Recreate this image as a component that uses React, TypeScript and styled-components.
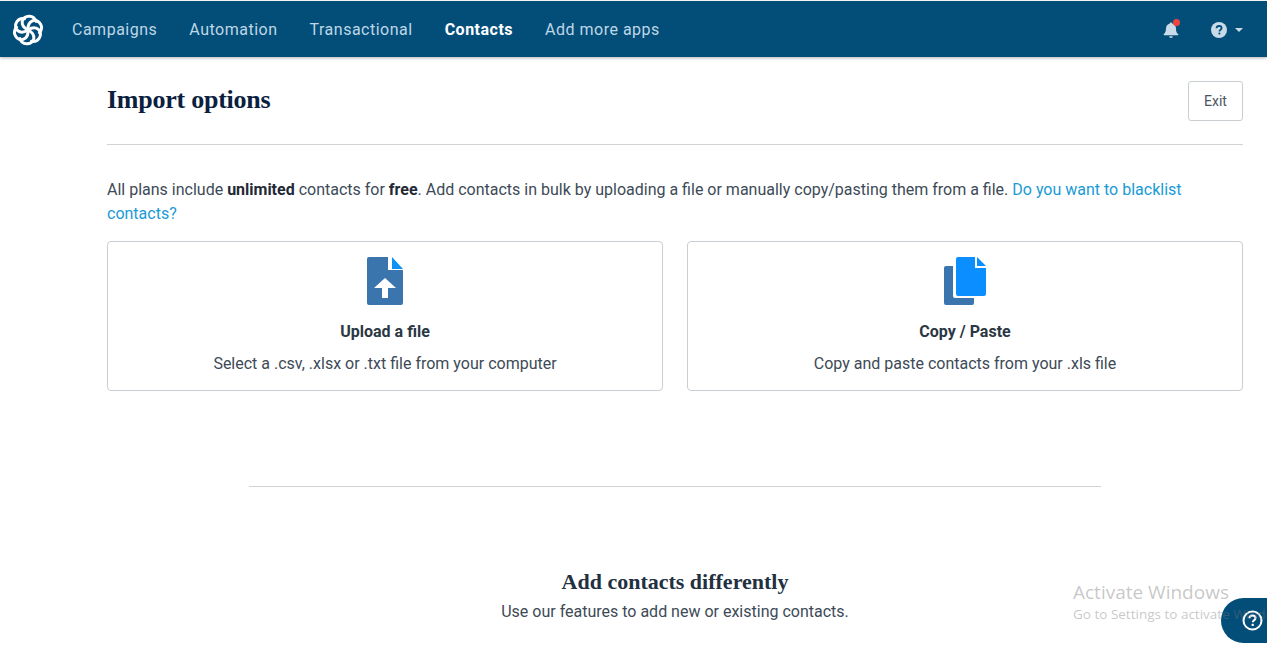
import React from "react";
import styled, { createGlobalStyle } from "styled-components";

const Global = createGlobalStyle`
  html, body { margin: 0; padding: 0; background: #fff; height: 100%; overflow: hidden; }
  body { font-family: Roboto, "Liberation Sans", sans-serif; color: #3d4a57; }
`;

const Page = styled.div`
  position: relative;
  width: 1267px;
  height: 655px;
  overflow: hidden;
  background: #fff;
`;

const TopBar = styled.header`
  display: flex;
  align-items: center;
  box-sizing: border-box;
  height: 56px;
  margin-top: 1px;
  padding: 1px 24px 0 12px;
  background: #034e79;
  box-shadow: 0 1px 3px rgba(0, 0, 0, 0.3);
`;

const Logo = styled.svg`
  width: 32px;
  height: 32px;
  margin-right: 28px;
  flex: none;
`;

const NavLink = styled.a<{ $active?: boolean }>`
  margin-right: 32px;
  font-size: 16px;
  letter-spacing: 0.5px;
  line-height: 24px;
  color: ${(p) => (p.$active ? "#ffffff" : "#bfd6e6")};
  font-weight: ${(p) => (p.$active ? 700 : 400)};
`;

const TopRight = styled.div`
  margin-left: auto;
  display: flex;
  align-items: center;
`;

const Bell = styled.div`
  position: relative;
  width: 16px;
  height: 18px;
  margin-right: 32px;
`;

const BellDot = styled.span`
  position: absolute;
  top: -2px;
  right: -1px;
  width: 7px;
  height: 7px;
  border-radius: 50%;
  background: #f0433f;
`;

const Caret = styled.span`
  width: 0;
  height: 0;
  margin-left: 8px;
  border-left: 4px solid transparent;
  border-right: 4px solid transparent;
  border-top: 4px solid #c9dbe8;
`;

const Main = styled.main`
  padding: 24px 24px 0 107px;
`;

const TitleRow = styled.div`
  display: flex;
  align-items: center;
  justify-content: space-between;
  height: 40px;
  padding-bottom: 23px;
  border-bottom: 1px solid #d0d3d6;
`;

const Title = styled.h1`
  margin: -2px 0 0;
  font-family: "Liberation Serif", serif;
  font-size: 26px;
  font-weight: 700;
  letter-spacing: -0.25px;
  color: #0b1f3f;
`;

const ExitButton = styled.button`
  width: 55px;
  height: 40px;
  padding: 0;
  background: #fff;
  border: 1px solid #c9ced3;
  border-radius: 3px;
  font: 400 14px/20px Roboto, sans-serif;
  color: #4a5560;
`;

const Intro = styled.p`
  margin: 33px 0 15px;
  font-size: 16px;
  line-height: 24px;
  color: #3d4a57;
  b { font-weight: 700; color: #1f2a36; }
  a { color: #1a9ad6; }
`;

const Cards = styled.div`
  display: grid;
  grid-template-columns: 1fr 1fr;
  gap: 24px;
`;

const Card = styled.div`
  display: flex;
  flex-direction: column;
  align-items: center;
  box-sizing: border-box;
  height: 150px;
  padding-top: 15px;
  border: 1px solid #c9ced3;
  border-radius: 4px;
`;

const CardIcon = styled.svg`
  width: 44px;
  height: 48px;
  margin-bottom: 15px;
`;

const CardTitle = styled.div`
  font-size: 16px;
  font-weight: 700;
  line-height: 24px;
  color: #2b3743;
  margin-bottom: 8px;
`;

const CardText = styled.div`
  font-size: 16px;
  line-height: 24px;
  color: #3d4a57;
`;

const Divider = styled.hr`
  width: 852px;
  height: 1px;
  margin: 95px 0 0 142px;
  border: 0;
  background: #d0d3d6;
`;

const Differently = styled.section`
  margin: 80px 0 0 0;
  text-align: center;
`;

const SubHeading = styled.h2`
  margin: 0;
  font-family: "Liberation Serif", serif;
  font-size: 22px;
  line-height: 30px;
  font-weight: 700;
  color: #22303f;
`;

const SubText = styled.p`
  margin: 3px 0 0;
  font-size: 16px;
  line-height: 24px;
  color: #3d4a57;
`;

const Watermark = styled.div`
  position: absolute;
  left: 1073px;
  top: 579px;
  width: 194px;
  overflow: hidden;
  white-space: nowrap;
  font-family: "Open Sans", sans-serif;
  color: rgba(120, 120, 120, 0.42);
  z-index: 3;
`;

const WatermarkTitle = styled.div`
  font-size: 19px;
  line-height: 26px;
`;

const WatermarkText = styled.div`
  font-size: 13.5px;
  line-height: 19px;
`;

const HelpTab = styled.div`
  position: absolute;
  left: 1221px;
  top: 598px;
  width: 60px;
  height: 45px;
  border-radius: 22.5px 0 0 22.5px;
  background: #034e79;
  z-index: 2;
`;

const HelpIcon = styled.svg`
  position: absolute;
  left: 21px;
  top: 12px;
  width: 21px;
  height: 21px;
  z-index: 4;
`;

const arcs = [0, 60, 120, 180, 240, 300];

export default function App() {
  return (
    <Page>
      <Global />
      <TopBar>
        <Logo viewBox="0 0 32 32" aria-label="logo">
          <g fill="none" stroke="#fff" strokeWidth="3" strokeLinecap="round">
            {arcs.map((a) => (
              <g key={a} transform={`rotate(${a} 16 16)`}>
                <path d="M16 16c-4-2-6.200-5-5.800-8.400C10.600 4.200 14 2 17.500 2.200c3.200.2 5.600 2.300 6.500 5.200" />
              </g>
            ))}
          </g>
        </Logo>
        <NavLink>Campaigns</NavLink>
        <NavLink>Automation</NavLink>
        <NavLink>Transactional</NavLink>
        <NavLink $active>Contacts</NavLink>
        <NavLink>Add more apps</NavLink>
        <TopRight>
          <Bell>
            <svg width="16" height="18" viewBox="0 0 16 18">
              <path fill="#c9dbe8" d="M8 1.500c-.7 0-1.200.5-1.200 1.100C4.500 3.200 3 5.200 3 7.500c0 3-1 4.400-2.200 5.600-.4.500-.1 1.100.5 1.100h13.400c.6 0 .9-.6.5-1.100C13.500 11.900 13 10.500 13 7.500c0-2.300-1.500-4.300-3.800-4.900C9.200 2 8.700 1.500 8 1.500z" />
              <path fill="#c9dbe8" d="M6.200 15.300h3.600c0 .9-.8 1.600-1.800 1.600s-1.800-.7-1.800-1.600z" />
            </svg>
            <BellDot />
          </Bell>
          <svg width="16" height="16" viewBox="0 0 16 16">
            <circle cx="8" cy="8" r="8" fill="#c9dbe8" />
            <path d="M5.500 6.200C5.600 4.800 6.700 4 8.100 4c1.500 0 2.500.9 2.500 2.100 0 1-.6 1.500-1.300 2-.6.400-.8.700-.8 1.300" fill="none" stroke="#034e79" strokeWidth="1.800" />
            <rect x="7.500" y="10.600" width="1.800" height="1.800" fill="#034e79" />
          </svg>
          <Caret />
        </TopRight>
      </TopBar>
      <Main>
        <TitleRow>
          <Title>Import options</Title>
          <ExitButton>Exit</ExitButton>
        </TitleRow>
        <Intro>
          All plans include <b>unlimited</b> contacts for <b>free</b>. Add contacts in bulk by uploading a file or manually copy/pasting them from a file. <a>Do you want to blacklist contacts?</a>
        </Intro>
        <Cards>
          <Card>
            <CardIcon viewBox="0 0 44 48">
              <path fill="#3a75ad" d="M4 2a2 2 0 0 1 2-2h19v13h15v33a2 2 0 0 1-2 2H6a2 2 0 0 1-2-2z" />
              <path fill="#0e90f5" d="M29 0l11 12H29z" />
              <path fill="#fff" d="M22 21l11 10h-8v10h-6V31h-8z" />
            </CardIcon>
            <CardTitle>Upload a file</CardTitle>
            <CardText>Select a .csv, .xlsx or .txt file from your computer</CardText>
          </Card>
          <Card>
            <CardIcon viewBox="0 0 44 48">
              <path fill="#3a75ad" d="M1 11a2 2 0 0 1 2-2h7v30a2 2 0 0 0 2 2h19v5a2 2 0 0 1-2 2H3a2 2 0 0 1-2-2z" />
              <path fill="#0b8eff" d="M15 0h17v11h11v26a2 2 0 0 1-2 2H15a2 2 0 0 1-2-2V2a2 2 0 0 1 2-2z" />
              <path fill="#0b8eff" d="M34 0l9 9h-9z" />
            </CardIcon>
            <CardTitle>Copy / Paste</CardTitle>
            <CardText>Copy and paste contacts from your .xls file</CardText>
          </Card>
        </Cards>
        <Divider />
        <Differently>
          <SubHeading>Add contacts differently</SubHeading>
          <SubText>Use our features to add new or existing contacts.</SubText>
        </Differently>
      </Main>
      <HelpTab>
        <HelpIcon viewBox="0 0 21 21">
          <circle cx="10.500" cy="10.500" r="9" fill="none" stroke="#fff" strokeWidth="2" />
          <path d="M7.400 8.300c.1-1.800 1.400-2.800 3.100-2.800 1.800 0 3 1.100 3 2.500 0 1.200-.7 1.800-1.500 2.400-.8.500-1.200 1-1.200 1.900" fill="none" stroke="#fff" strokeWidth="2" />
          <rect x="9.600" y="13.800" width="2.200" height="2.200" fill="#fff" />
        </HelpIcon>
      </HelpTab>
      <Watermark>
        <WatermarkTitle>Activate Windows</WatermarkTitle>
        <WatermarkText>Go to Settings to activate Windows.</WatermarkText>
      </Watermark>
    </Page>
  );
}
